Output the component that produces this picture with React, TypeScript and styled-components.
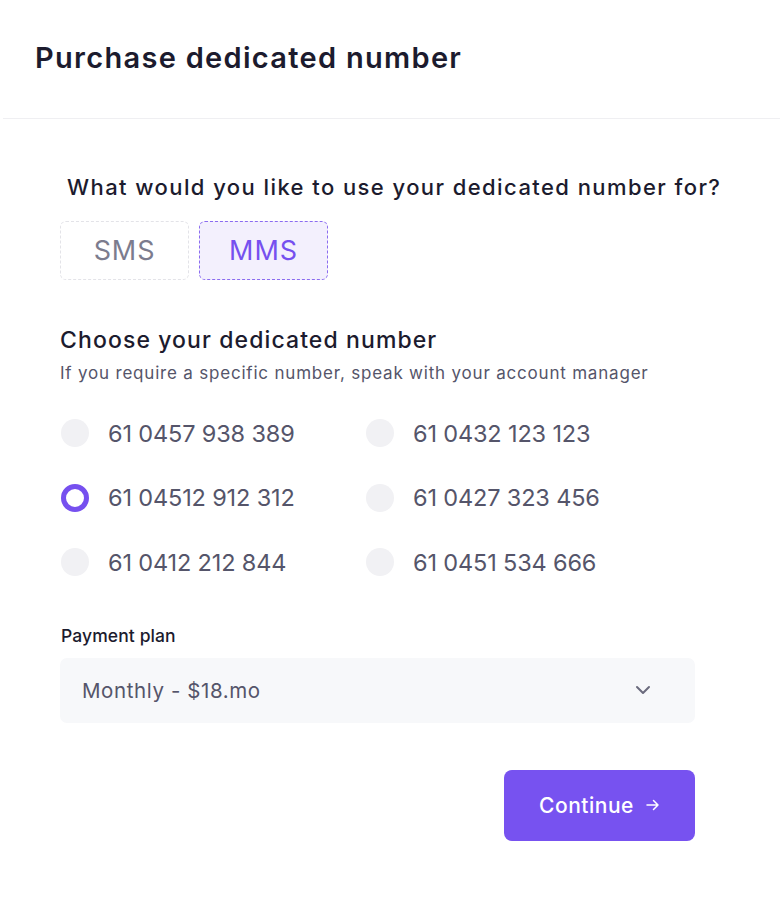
import React, { useState } from "react";
import styled, { createGlobalStyle } from "styled-components";

const Global = createGlobalStyle`
  html, body { margin: 0; padding: 0; background: #ffffff; }
  body { font-family: "Inter", "Noto Sans", sans-serif; -webkit-font-smoothing: antialiased; }
  * { box-sizing: border-box; }
`;

const Page = styled.div`
  width: 780px;
  height: 904px;
  background: #fff;
  display: flex;
  flex-direction: column;
`;

const Header = styled.header`
  height: 119px;
  margin-left: 3px;
  padding-left: 32px;
  padding-top: 40px;
  border-bottom: 1px solid #efeff2;
`;

const Title = styled.h1`
  margin: 0;
  font-size: 29px;
  font-weight: 600;
  color: #1c1b2e;
  letter-spacing: 1.3px;
  line-height: 36px;
`;

const Body = styled.div`
  padding: 55px 0 0 60px;
  width: 695px;
  display: flex;
  flex-direction: column;
`;

const Question = styled.h2`
  margin: 0 0 0 7px;
  font-size: 22px;
  font-weight: 500;
  color: #1c1b2e;
  line-height: 26px;
  letter-spacing: 1.42px;
  white-space: nowrap;
`;

const ToggleRow = styled.div`
  display: flex;
  gap: 10px;
  margin-top: 21px;
`;

const Toggle = styled.button<{ $active?: boolean }>`
  width: 129px;
  height: 59px;
  border-radius: 6px;
  border: 1.5px dashed ${(p) => (p.$active ? "#8b6cf0" : "#e3e3e8")};
  background: ${(p) => (p.$active ? "#f3f0fd" : "#ffffff")};
  color: ${(p) => (p.$active ? "#7650ef" : "#7c7c8e")};
  font-family: inherit;
  font-size: 27px;
  font-weight: 400;
  letter-spacing: 0.9px;
  cursor: pointer;
  padding: 0;
`;

const SectionTitle = styled.h3`
  margin: 46px 0 0 0;
  font-size: 23px;
  font-weight: 500;
  color: #1c1b2e;
  line-height: 28px;
  letter-spacing: 1.1px;
`;

const SubText = styled.p`
  margin: 8px 0 0 0;
  font-size: 17px;
  color: #55556a;
  line-height: 22px;
  letter-spacing: 0.8px;
  white-space: nowrap;
`;

const NumberGrid = styled.div`
  display: grid;
  grid-template-columns: 305px 300px;
  grid-auto-rows: 64.5px;
  margin-top: 17px;
`;

const Option = styled.label`
  display: flex;
  align-items: center;
  gap: 19px;
  cursor: pointer;
  height: 64px;
  padding-left: 1px;
`;

const Radio = styled.span<{ $checked?: boolean }>`
  width: 28px;
  height: 28px;
  border-radius: 50%;
  flex: none;
  background: ${(p) => (p.$checked ? "#ffffff" : "#f1f1f4")};
  border: ${(p) => (p.$checked ? "5px solid #7650ef" : "none")};
`;

const NumberText = styled.span`
  font-size: 23.5px;
  color: #55556a;
  letter-spacing: -0.15px;
`;

const FieldLabel = styled.div`
  margin: 29px 0 0 1px;
  font-size: 17.5px;
  font-weight: 500;
  color: #1c1b2e;
  line-height: 24px;
  letter-spacing: 0.1px;
`;

const Select = styled.div`
  margin-top: 10px;
  height: 65px;
  width: 635px;
  border-radius: 7px;
  background: #f7f8fa;
  display: flex;
  align-items: center;
  justify-content: space-between;
  padding: 0 44px 0 22px;
`;

const SelectText = styled.span`
  font-size: 20.5px;
  color: #55556a;
  letter-spacing: 0.6px;
`;

const Footer = styled.div`
  display: flex;
  justify-content: flex-end;
  width: 635px;
  margin-top: 47px;
`;

const PrimaryButton = styled.button`
  width: 191px;
  height: 71px;
  border: none;
  border-radius: 8px;
  background: #7752f0;
  color: #ffffff;
  font-family: inherit;
  font-size: 21px;
  font-weight: 500;
  letter-spacing: 0.5px;
  display: flex;
  align-items: center;
  justify-content: center;
  gap: 12px;
  cursor: pointer;
`;

const numbers = [
  "61 0457 938 389",
  "61 0432 123 123",
  "61 04512 912 312",
  "61 0427 323 456",
  "61 0412 212 844",
  "61 0451 534 666",
];

export default function App() {
  const [mode, setMode] = useState("MMS");
  const [sel, setSel] = useState(2);
  return (
    <Page>
      <Global />
      <Header>
        <Title>Purchase dedicated number</Title>
      </Header>
      <Body>
        <Question>What would you like to use your dedicated number for?</Question>
        <ToggleRow>
          <Toggle $active={mode === "SMS"} onClick={() => setMode("SMS")}>SMS</Toggle>
          <Toggle $active={mode === "MMS"} onClick={() => setMode("MMS")}>MMS</Toggle>
        </ToggleRow>
        <SectionTitle>Choose your dedicated number</SectionTitle>
        <SubText>If you require a specific number, speak with your account manager</SubText>
        <NumberGrid>
          {numbers.map((n, i) => (
            <Option key={n} onClick={() => setSel(i)}>
              <Radio $checked={sel === i} />
              <NumberText>{n}</NumberText>
            </Option>
          ))}
        </NumberGrid>
        <FieldLabel>Payment plan</FieldLabel>
        <Select>
          <SelectText>Monthly - $18.mo</SelectText>
          <svg width="16" height="10" viewBox="0 0 16 10" fill="none">
            <path d="M2 2l6 6 6-6" stroke="#6b6b7d" strokeWidth="2" strokeLinecap="round" strokeLinejoin="round" />
          </svg>
        </Select>
        <Footer>
          <PrimaryButton>
            Continue
            <svg width="14" height="12" viewBox="0 0 14 12" fill="none">
              <path d="M1 6h11M7.5 1.5L12 6l-4.5 4.5" stroke="#fff" strokeWidth="1.5" strokeLinecap="round" strokeLinejoin="round" />
            </svg>
          </PrimaryButton>
        </Footer>
      </Body>
    </Page>
  );
}
